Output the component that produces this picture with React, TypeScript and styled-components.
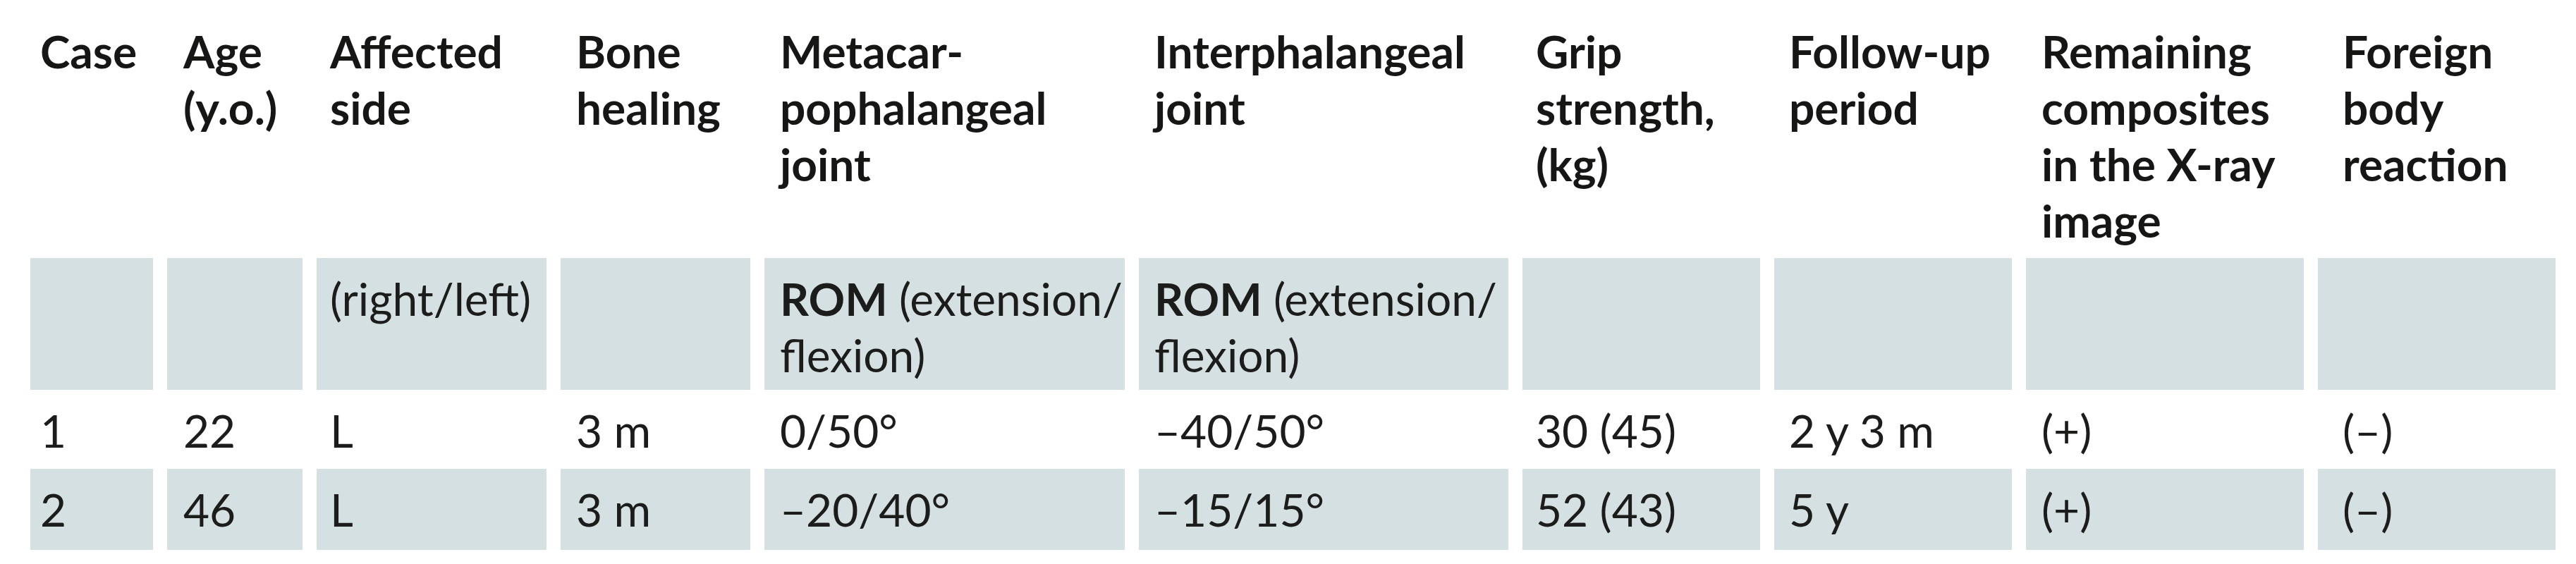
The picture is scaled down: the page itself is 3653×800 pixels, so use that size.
import React from 'react'
import styled, { createGlobalStyle } from 'styled-components'

const GlobalStyle = createGlobalStyle`
  html, body {
    margin: 0;
    padding: 0;
    background: #ffffff;
  }
  body {
    font-family: Lato, "Open Sans", "Liberation Sans", sans-serif;
    color: #1c1c1b;
  }
`

const SHADE = '#d5e0e3'

// width of each column's shaded box, and the left inset of its text
const COLUMNS = [
  { width: 174, pad: 14 },
  { width: 192, pad: 23 },
  { width: 326, pad: 19 },
  { width: 269, pad: 22 },
  { width: 511, pad: 22 },
  { width: 524, pad: 22 },
  { width: 337, pad: 19 },
  { width: 337, pad: 21 },
  { width: 394, pad: 22 },
  { width: 337, pad: 35 },
]

const Table = styled.table`
  margin-left: 23px;
  width: 3621px;
  table-layout: fixed;
  border-collapse: separate;
  border-spacing: 20px 0;
  font-size: 64px;
  line-height: 80px;
`

const Row = styled.tr<{ $height: number }>`
  height: ${(p) => p.$height}px;
`

const HeadCell = styled.th<{ $pad: number }>`
  padding: 33px 0 0 ${(p) => p.$pad}px;
  text-align: left;
  vertical-align: top;
  font-weight: 700;
  color: #161615;
`

const Cell = styled.td<{ $pad: number; $shaded?: boolean }>`
  padding: 18px 0 0 ${(p) => p.$pad}px;
  text-align: left;
  vertical-align: top;
  font-weight: 400;
  background: ${(p) => (p.$shaded ? SHADE : 'transparent')};
`

const Strong = styled.b`
  font-weight: 700;
`

const HEADERS: string[][] = [
  ['Case'],
  ['Age', '(y.o.)'],
  ['Affected', 'side'],
  ['Bone', 'healing'],
  ['Metacar-', 'pophalangeal', 'joint'],
  ['Interphalangeal', 'joint'],
  ['Grip', 'strength,', '(kg)'],
  ['Follow-up', 'period'],
  ['Remaining', 'composites', 'in the X-ray', 'image'],
  ['Foreign', 'body', 'reaction'],
]

const rom = (
  <>
    <Strong>ROM</Strong> (extension/
    <br />
    flexion)
  </>
)

const UNITS: React.ReactNode[] = ['', '', '(right/left)', '', rom, rom, '', '', '', '']

const CASES: string[][] = [
  ['1', '22', 'L', '3 m', '0/50°', '–40/50°', '30 (45)', '2 y 3 m', '(+)', '(–)'],
  ['2', '46', 'L', '3 m', '–20/40°', '–15/15°', '52 (43)', '5 y', '(+)', '(–)'],
]

export default function App() {
  return (
    <>
      <GlobalStyle />
      <Table>
        <colgroup>
          {COLUMNS.map((c, i) => (
            <col key={i} style={{ width: c.width }} />
          ))}
        </colgroup>
        <thead>
          <Row $height={366}>
            {HEADERS.map((lines, i) => (
              <HeadCell key={i} $pad={COLUMNS[i].pad}>
                {lines.map((line, j) => (
                  <React.Fragment key={j}>
                    {j > 0 && <br />}
                    {line}
                  </React.Fragment>
                ))}
              </HeadCell>
            ))}
          </Row>
        </thead>
        <tbody>
          <Row $height={187}>
            {UNITS.map((unit, i) => (
              <Cell key={i} $pad={COLUMNS[i].pad} $shaded>
                {unit}
              </Cell>
            ))}
          </Row>
          {CASES.map((values, r) => (
            <Row key={r} $height={r === 0 ? 112 : 115}>
              {values.map((v, i) => (
                <Cell key={i} $pad={COLUMNS[i].pad} $shaded={r % 2 === 1}>
                  {v}
                </Cell>
              ))}
            </Row>
          ))}
        </tbody>
      </Table>
    </>
  )
}
